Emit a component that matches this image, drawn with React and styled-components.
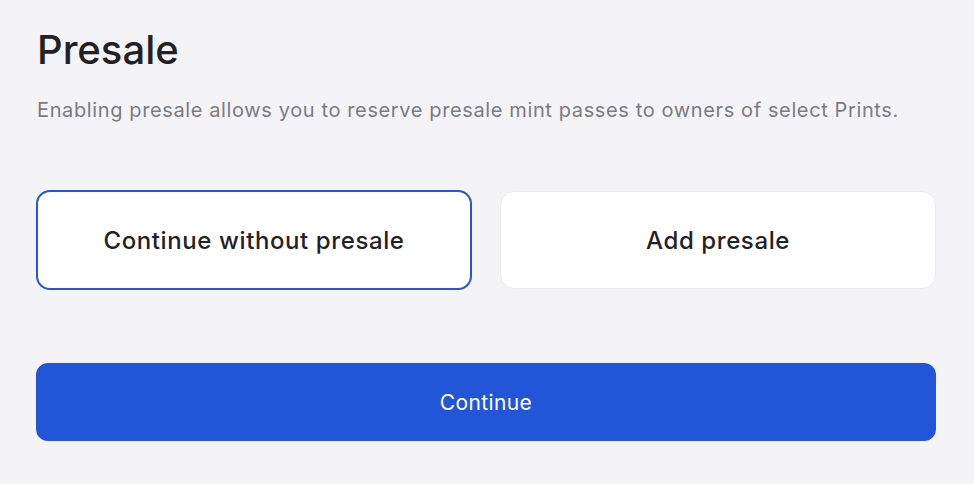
import React, { useState } from 'react';
import styled, { createGlobalStyle } from 'styled-components';

const GlobalStyle = createGlobalStyle`
  html, body {
    margin: 0;
    background: #f4f4f6;
  }
  body {
    font-family: Inter, "Noto Sans", sans-serif;
    -webkit-font-smoothing: antialiased;
  }
`;

const Page = styled.div`
  box-sizing: border-box;
  width: 974px;
  height: 484px;
  padding: 26px 38px 0 36px;
  display: flex;
  flex-direction: column;
`;

const Title = styled.h1`
  margin: 0 0 0 1px;
  font-size: 40px;
  line-height: 48px;
  font-weight: 500;
  letter-spacing: 0;
  color: #222226;
`;

const Subtitle = styled.p`
  margin: 24px 0 0 1px;
  font-size: 20px;
  line-height: 24px;
  letter-spacing: 0.62px;
  color: #7b7b82;
`;

const Options = styled.div`
  display: grid;
  grid-template-columns: 1fr 1fr;
  gap: 28px;
  margin-top: 68px;
`;

const Option = styled.button`
  box-sizing: border-box;
  margin: ${({ $selected }) => ($selected ? '0' : '1px 0')};
  height: ${({ $selected }) => ($selected ? '100px' : '98px')};
  border-radius: 14px;
  background: #ffffff;
  border: ${({ $selected }) => ($selected ? '2px solid #2356d9' : '1.5px solid #ebebee')};
  font-family: inherit;
  font-size: 24px;
  font-weight: 500;
  letter-spacing: 0.6px;
  color: #232327;
  cursor: pointer;
`;

const Submit = styled.button`
  margin-top: 73px;
  height: 78px;
  border: none;
  border-radius: 12px;
  background: #2355d9;
  color: #ffffff;
  font-family: inherit;
  font-size: 21px;
  font-weight: 400;
  letter-spacing: 0.4px;
  cursor: pointer;
`;

export default function App() {
  const [choice, setChoice] = useState('none');
  return (
    <>
      <GlobalStyle />
      <Page>
        <Title>Presale</Title>
        <Subtitle>
          Enabling presale allows you to reserve presale mint passes to owners of select Prints.
        </Subtitle>
        <Options>
          <Option $selected={choice === 'none'} onClick={() => setChoice('none')}>
            Continue without presale
          </Option>
          <Option $selected={choice === 'add'} onClick={() => setChoice('add')}>
            Add presale
          </Option>
        </Options>
        <Submit>Continue</Submit>
      </Page>
    </>
  );
}
